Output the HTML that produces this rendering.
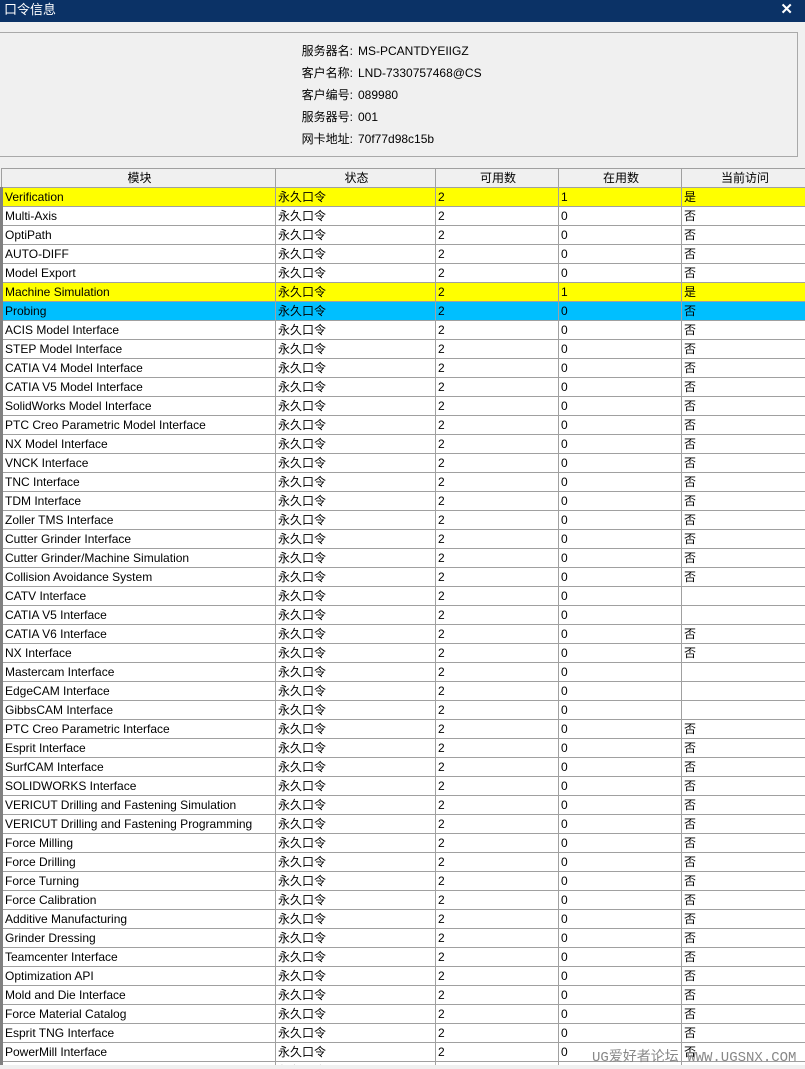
<!DOCTYPE html>
<html><head><meta charset="utf-8"><style>
*{margin:0;padding:0;box-sizing:border-box}
html,body{width:805px;height:1069px;overflow:hidden}
body{background:#f0f0f0;font-family:"Liberation Sans","Noto Sans CJK SC",sans-serif;font-size:12px;color:#000;position:relative}
.title{position:absolute;left:0;top:0;width:805px;height:22px;background:#0b3266;color:#fff;font-size:13px;line-height:20px;padding-left:4px}
.x{position:absolute;right:12px;top:0;font-weight:bold;font-size:15px;line-height:20px}
.info{position:absolute;left:-1px;top:32px;width:799px;height:125px;border:1px solid #a9a9a9;border-left:none}
.r{position:absolute;left:0;width:800px;height:22px;line-height:22px}
.r b{font-weight:normal;position:absolute;right:446px}
.r i{font-style:normal;position:absolute;left:359px}
table{position:absolute;left:0;top:168px;width:805px;border-collapse:collapse;table-layout:fixed}
td,th{border:1px solid #a0a0a0;height:19px;line-height:17px;padding:0 0 0 2px;white-space:nowrap;overflow:hidden;font-weight:normal;text-align:left}
th{text-align:center;background:#f0f0f0;height:19px}
td:first-child{border-left:3px solid #808080}
th:first-child{border-left:1px solid #a0a0a0}
tr.y td{background:#ffff00}
tr.b td{background:#00bfff}
tr td{background:#fff}
.bot{position:absolute;left:0;top:1065px;width:805px;height:4px;background:#f0f0f0;z-index:2}
.wm{position:absolute;left:592px;top:1046px;font-family:"Liberation Mono","Noto Sans CJK SC",monospace;color:#888;font-size:14px;z-index:3}
</style></head><body>
<div class="title">口令信息<span class="x">✕</span></div>
<div class="info">
<div class="r" style="top:7px"><b>服务器名:</b><i>MS-PCANTDYEIIGZ</i></div>
<div class="r" style="top:29px"><b>客户名称:</b><i>LND-7330757468@CS</i></div>
<div class="r" style="top:51px"><b>客户编号:</b><i>089980</i></div>
<div class="r" style="top:73px"><b>服务器号:</b><i>001</i></div>
<div class="r" style="top:95px"><b>网卡地址:</b><i>70f77d98c15b</i></div>
</div>
<table>
<colgroup><col style="width:274px"><col style="width:160px"><col style="width:123px"><col style="width:123px"><col style="width:125px"></colgroup>
<tr><th>模块</th><th>状态</th><th>可用数</th><th>在用数</th><th>当前访问</th></tr>
<tr class="y"><td>Verification</td><td>永久口令</td><td>2</td><td>1</td><td>是</td></tr>
<tr><td>Multi-Axis</td><td>永久口令</td><td>2</td><td>0</td><td>否</td></tr>
<tr><td>OptiPath</td><td>永久口令</td><td>2</td><td>0</td><td>否</td></tr>
<tr><td>AUTO-DIFF</td><td>永久口令</td><td>2</td><td>0</td><td>否</td></tr>
<tr><td>Model Export</td><td>永久口令</td><td>2</td><td>0</td><td>否</td></tr>
<tr class="y"><td>Machine Simulation</td><td>永久口令</td><td>2</td><td>1</td><td>是</td></tr>
<tr class="b"><td>Probing</td><td>永久口令</td><td>2</td><td>0</td><td>否</td></tr>
<tr><td>ACIS Model Interface</td><td>永久口令</td><td>2</td><td>0</td><td>否</td></tr>
<tr><td>STEP Model Interface</td><td>永久口令</td><td>2</td><td>0</td><td>否</td></tr>
<tr><td>CATIA V4 Model Interface</td><td>永久口令</td><td>2</td><td>0</td><td>否</td></tr>
<tr><td>CATIA V5 Model Interface</td><td>永久口令</td><td>2</td><td>0</td><td>否</td></tr>
<tr><td>SolidWorks Model Interface</td><td>永久口令</td><td>2</td><td>0</td><td>否</td></tr>
<tr><td>PTC Creo Parametric Model Interface</td><td>永久口令</td><td>2</td><td>0</td><td>否</td></tr>
<tr><td>NX Model Interface</td><td>永久口令</td><td>2</td><td>0</td><td>否</td></tr>
<tr><td>VNCK Interface</td><td>永久口令</td><td>2</td><td>0</td><td>否</td></tr>
<tr><td>TNC Interface</td><td>永久口令</td><td>2</td><td>0</td><td>否</td></tr>
<tr><td>TDM Interface</td><td>永久口令</td><td>2</td><td>0</td><td>否</td></tr>
<tr><td>Zoller TMS Interface</td><td>永久口令</td><td>2</td><td>0</td><td>否</td></tr>
<tr><td>Cutter Grinder Interface</td><td>永久口令</td><td>2</td><td>0</td><td>否</td></tr>
<tr><td>Cutter Grinder/Machine Simulation</td><td>永久口令</td><td>2</td><td>0</td><td>否</td></tr>
<tr><td>Collision Avoidance System</td><td>永久口令</td><td>2</td><td>0</td><td>否</td></tr>
<tr><td>CATV Interface</td><td>永久口令</td><td>2</td><td>0</td><td></td></tr>
<tr><td>CATIA V5 Interface</td><td>永久口令</td><td>2</td><td>0</td><td></td></tr>
<tr><td>CATIA V6 Interface</td><td>永久口令</td><td>2</td><td>0</td><td>否</td></tr>
<tr><td>NX Interface</td><td>永久口令</td><td>2</td><td>0</td><td>否</td></tr>
<tr><td>Mastercam Interface</td><td>永久口令</td><td>2</td><td>0</td><td></td></tr>
<tr><td>EdgeCAM Interface</td><td>永久口令</td><td>2</td><td>0</td><td></td></tr>
<tr><td>GibbsCAM Interface</td><td>永久口令</td><td>2</td><td>0</td><td></td></tr>
<tr><td>PTC Creo Parametric Interface</td><td>永久口令</td><td>2</td><td>0</td><td>否</td></tr>
<tr><td>Esprit Interface</td><td>永久口令</td><td>2</td><td>0</td><td>否</td></tr>
<tr><td>SurfCAM Interface</td><td>永久口令</td><td>2</td><td>0</td><td>否</td></tr>
<tr><td>SOLIDWORKS Interface</td><td>永久口令</td><td>2</td><td>0</td><td>否</td></tr>
<tr><td>VERICUT Drilling and Fastening Simulation</td><td>永久口令</td><td>2</td><td>0</td><td>否</td></tr>
<tr><td>VERICUT Drilling and Fastening Programming</td><td>永久口令</td><td>2</td><td>0</td><td>否</td></tr>
<tr><td>Force Milling</td><td>永久口令</td><td>2</td><td>0</td><td>否</td></tr>
<tr><td>Force Drilling</td><td>永久口令</td><td>2</td><td>0</td><td>否</td></tr>
<tr><td>Force Turning</td><td>永久口令</td><td>2</td><td>0</td><td>否</td></tr>
<tr><td>Force Calibration</td><td>永久口令</td><td>2</td><td>0</td><td>否</td></tr>
<tr><td>Additive Manufacturing</td><td>永久口令</td><td>2</td><td>0</td><td>否</td></tr>
<tr><td>Grinder Dressing</td><td>永久口令</td><td>2</td><td>0</td><td>否</td></tr>
<tr><td>Teamcenter Interface</td><td>永久口令</td><td>2</td><td>0</td><td>否</td></tr>
<tr><td>Optimization API</td><td>永久口令</td><td>2</td><td>0</td><td>否</td></tr>
<tr><td>Mold and Die Interface</td><td>永久口令</td><td>2</td><td>0</td><td>否</td></tr>
<tr><td>Force Material Catalog</td><td>永久口令</td><td>2</td><td>0</td><td>否</td></tr>
<tr><td>Esprit TNG Interface</td><td>永久口令</td><td>2</td><td>0</td><td>否</td></tr>
<tr><td>PowerMill Interface</td><td>永久口令</td><td>2</td><td>0</td><td>否</td></tr>
<tr><td>Cimatron CAM Interface</td><td>永久口令</td><td>2</td><td>0</td><td>否</td></tr>
</table>
<div class="wm">UG爱好者论坛 WWW.UGSNX.COM</div>
<div class="bot"></div>
</body></html>
